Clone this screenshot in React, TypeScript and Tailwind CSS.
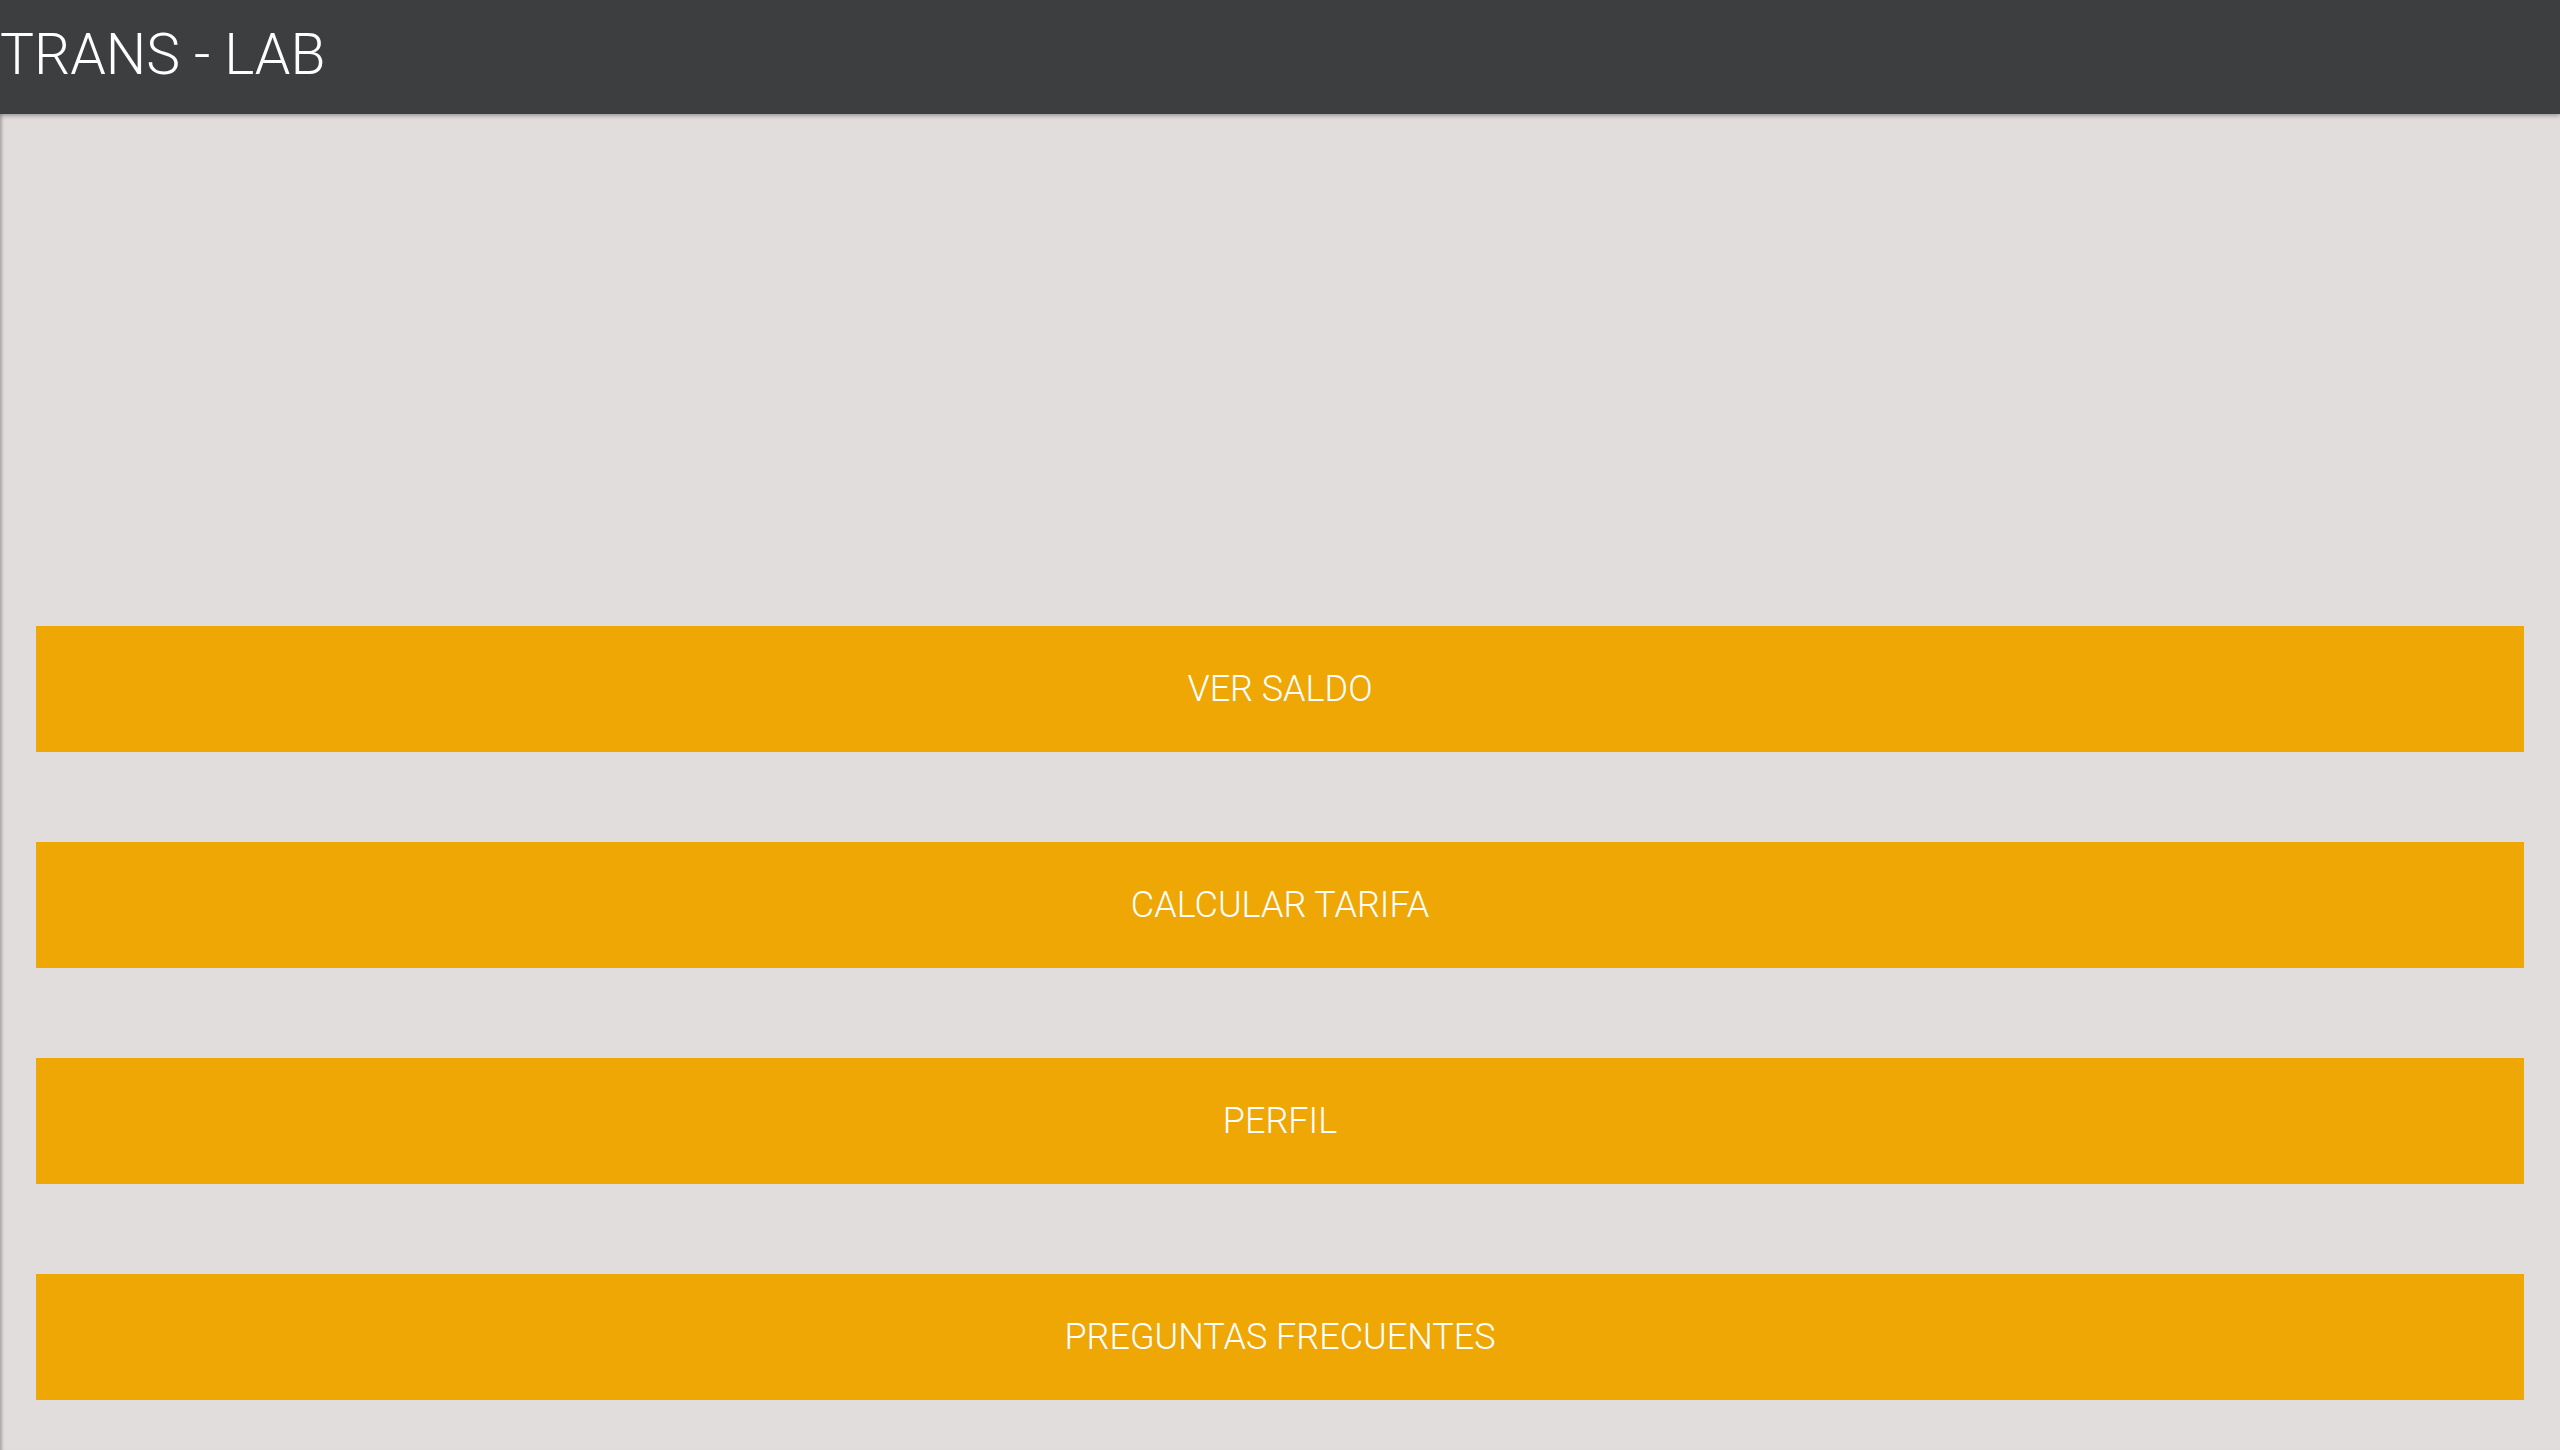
const items = ["VER SALDO", "CALCULAR TARIFA", "PERFIL", "PREGUNTAS FRECUENTES"];

export default function App() {
  return (
    <div className="min-h-screen w-full bg-[#e2dddd] font-['Roboto',sans-serif] shadow-[inset_4px_0_3px_-2px_rgba(0,0,0,0.25)]">
      {/* header */}
      <header className="relative z-10 flex h-[114px] items-center bg-[#3d3e40] pb-[6px] shadow-[0_2px_4px_rgba(0,0,0,0.3)]">
        <h1 className="text-[57px] font-light leading-none text-white">TRANS - LAB</h1>
      </header>

      {/* main */}
      <main className="flex flex-col gap-[90px] px-[36px] pt-[512px] pb-[50px]">
        {items.map((label) => (
          <button
            key={label}
            className="flex h-[126px] w-full items-center justify-center bg-[#efa706] text-[36px] font-light text-white"
          >
            {label}
          </button>
        ))}
      </main>
    </div>
  );
}
